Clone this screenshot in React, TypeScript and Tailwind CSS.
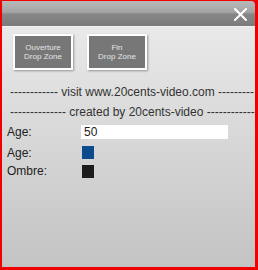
import React from "react";

export default function App() {
  const font = { fontFamily: '"Liberation Sans", Arial, sans-serif' };
  return (
    <div
      className="w-[258px] h-[270px] flex flex-col border-l-2 border-t border-r-[3px] border-b-[3px] border-[#f00000] bg-[#f00000] overflow-hidden"
      style={font}
    >
      <div className="h-[25px] shrink-0 flex items-center justify-end pr-[8px] rounded-tr-[4px] bg-[linear-gradient(to_bottom,#b8b8b8_0%,#a4a4a4_45%,#878787_52%,#7b7b7b_100%)]">
        <svg width="13" height="13" viewBox="0 0 13 13" className="mt-[1px]">
          <path d="M1 1 L12 12 M12 1 L1 12" stroke="#ffffff" strokeWidth="2" strokeLinecap="square" />
        </svg>
      </div>
      <div className="flex-1 flex flex-col bg-[linear-gradient(to_bottom,#e9e9e9_0%,#d6d6d6_50%,#c3c3c3_100%)] border-t border-[#f2f2f2]">
        <div className="flex gap-[14px] pl-[11px] mt-[7px]">
          <div className="w-[60px] h-[36px] border-2 border-white bg-[#777777] shadow-[1px_1px_2px_rgba(0,0,0,0.35)] flex flex-col items-center justify-center text-[8px] leading-[9px] text-[#e4e4e4]">
            <span>Ouverture</span>
            <span>Drop Zone</span>
          </div>
          <div className="w-[60px] h-[36px] border-2 border-white bg-[#777777] shadow-[1px_1px_2px_rgba(0,0,0,0.35)] flex flex-col items-center justify-center text-[8px] leading-[9px] text-[#e4e4e4]">
            <span>Fin</span>
            <span>Drop Zone</span>
          </div>
        </div>
        <div className="mt-[12px] pl-[8px] text-[12px] leading-[20px] text-[#333333] whitespace-nowrap">
          ------------ visit www.20cents-video.com ---------
        </div>
        <div className="pl-[8px] text-[12px] leading-[20px] text-[#333333] whitespace-nowrap">
          -------------- created by 20cents-video ------------
        </div>
        <div className="flex items-center h-[20px] pl-[5px] text-[12px] text-[#222222]">
          <span className="w-[74px]">Age:</span>
          <div className="w-[147px] h-[14px] bg-white flex items-center pl-[3px] text-[12px] text-[#222222]">50</div>
        </div>
        <div className="flex items-center h-[21px] pl-[5px] text-[12px] text-[#222222]">
          <span className="w-[74px]">Age:</span>
          <div className="ml-[1px] w-[12px] h-[13px] bg-[#0b4a8c]"></div>
        </div>
        <div className="flex items-center h-[16px] pl-[5px] text-[12px] text-[#222222]">
          <span className="w-[74px]">Ombre:</span>
          <div className="ml-[1px] w-[12px] h-[13px] bg-[#1c1c1c]"></div>
        </div>
      </div>
    </div>
  );
}
